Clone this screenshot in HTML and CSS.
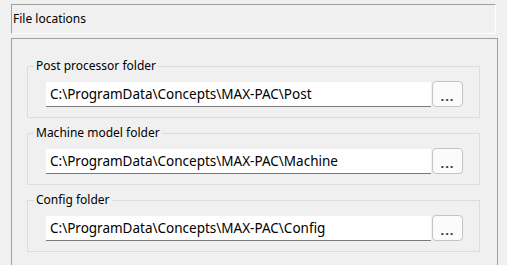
FILE: index.html
```html
<!DOCTYPE html>
<html>
  <head>
    <title>File locations</title>
    <link rel="stylesheet" href="styles.css">
  </head>
  <body>
    <div class="page-header">File locations</div>

    <div class="panel">
      <fieldset class="group">
        <legend>Post processor folder</legend>
        <div class="path-row">
          <input class="path-input" type="text" value="C:\ProgramData\Concepts\MAX-PAC\Post">
          <button class="browse-button">...</button>
        </div>
      </fieldset>

      <fieldset class="group">
        <legend>Machine model folder</legend>
        <div class="path-row">
          <input class="path-input" type="text" value="C:\ProgramData\Concepts\MAX-PAC\Machine">
          <button class="browse-button">...</button>
        </div>
      </fieldset>

      <fieldset class="group">
        <legend>Config folder</legend>
        <div class="path-row">
          <input class="path-input" type="text" value="C:\ProgramData\Concepts\MAX-PAC\Config">
          <button class="browse-button">...</button>
        </div>
      </fieldset>
    </div>
  </body>
</html>
```

FILE: styles.css
```css
body {
  font-family: "Noto Sans", "Liberation Sans", sans-serif;
  font-size: 12px;
  margin: 0;
  background: #f0f0f0;
  color: #000;
  height: 265px;
  overflow: hidden;
}

.page-header {
  margin: 4px 11px 0 11px;
  height: 28px;
  line-height: 28px;
  padding-left: 1px;
  border-top: 1px solid #a0a0a0;
  border-left: 1px solid #a0a0a0;
  border-bottom: 1px solid #ffffff;
  border-right: 1px solid #ffffff;
}

.panel {
  margin: 4px 9px 0 11px;
  border: 1px solid #a0a0a0;
  padding: 19px 17px 0 15px;
  height: 300px;
  display: flex;
  flex-direction: column;
  gap: 7px;
}

.group {
  margin: 0;
  border: 1px solid #dcdcdc;
  padding: 8px 16px 10px 18px;
  min-width: 0;
}

.group legend {
  margin-left: -12px;
  padding: 0 2px;
  line-height: 16px;
}

.path-row {
  display: flex;
  align-items: flex-start;
}

.path-input {
  flex: 1;
  min-width: 0;
  height: 25px;
  box-sizing: border-box;
  margin: 0;
  padding: 0 4px;
  border: none;
  border-bottom: 1px solid #7a7a7a;
  background: #ffffff;
  font-family: inherit;
  font-size: 13.5px;
  color: #000;
  outline: none;
}

.browse-button {
  width: 31px;
  height: 26px;
  margin: -1px 0 0 1px;
  padding: 4px 0 0 0;
  box-sizing: border-box;
  border: 1px solid #c4c4c4;
  border-radius: 4px;
  background: #fbfbfb;
  font-family: inherit;
  font-size: 13px;
  font-weight: bold;
  color: #1a3a6a;
  letter-spacing: 1px;
  line-height: 1;
}
```
